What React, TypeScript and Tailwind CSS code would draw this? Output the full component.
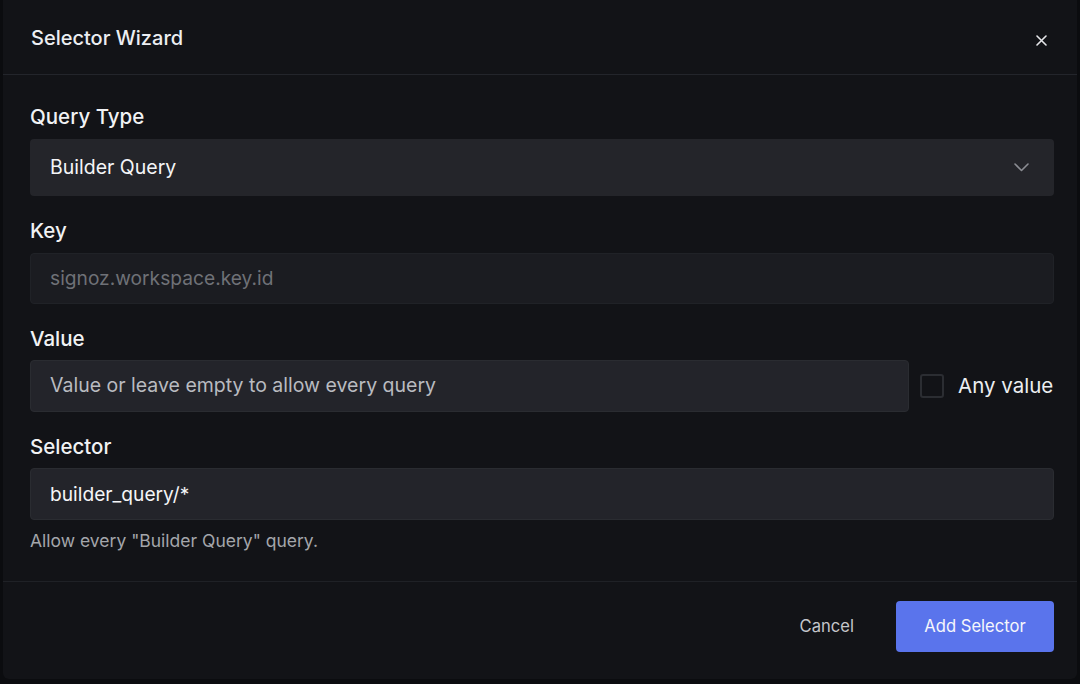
import React from "react";

export default function App() {
  const font = { fontFamily: "Inter, 'Noto Sans', sans-serif" };
  return (
    <div className="w-[1080px] h-[684px] bg-[#0b0c0f] overflow-hidden" style={font}>
      <div className="ml-[3px] w-[1074px] h-[679px] bg-[#121317] rounded-b-[6px] flex flex-col">
        {/* Header */}
        <div className="h-[75px] border-b border-[#23252b] flex items-center justify-between pl-[28px] pr-[30px] shrink-0">
          <div className="text-[20px] font-medium text-[#eceef2] mt-[1px]">Selector Wizard</div>
          <svg width="11" height="11" viewBox="0 0 11 11" className="mt-[6px]">
            <path d="M1 1 L10 10 M10 1 L1 10" stroke="#e6e7ea" strokeWidth="1.6" strokeLinecap="round" />
          </svg>
        </div>

        {/* Body */}
        <div className="flex-1 pl-[27px] pr-[23px] pt-[29px]">
          <div className="text-[20.5px] font-medium text-[#f1f2f4] leading-[26px]">Query Type</div>
          <div className="mt-[9px] h-[57px] rounded-[4px] bg-[#24252a] flex items-center justify-between pl-[20px] pr-[25px]">
            <span className="text-[19.5px] text-[#f4f5f7]">Builder Query</span>
            <svg width="15" height="9" viewBox="0 0 15 9">
              <path d="M1 1 L7.5 7.5 L14 1" fill="none" stroke="#8b8d93" strokeWidth="1.6" strokeLinecap="round" strokeLinejoin="round" />
            </svg>
          </div>

          <div className="mt-[22px] text-[20.5px] font-medium text-[#f1f2f4] leading-[26px]">Key</div>
          <div className="mt-[9px] h-[51px] rounded-[4px] bg-[#1b1c21] border border-[#202227] flex items-center pl-[19px]">
            <span className="text-[19.2px] text-[#6f7177]">signoz.workspace.key.id</span>
          </div>

          <div className="mt-[22px] text-[20.5px] font-medium text-[#f1f2f4] leading-[26px]">Value</div>
          <div className="mt-[8px] flex items-center">
            <div className="w-[879px] h-[52px] rounded-[4px] bg-[#23242a] border border-[#2a2c31] flex items-center pl-[19px]">
              <span className="text-[19.5px] text-[#b9bbc0]">Value or leave empty to allow every query</span>
            </div>
            <div className="ml-[11px] w-[24px] h-[24px] rounded-[3px] border-2 border-[#2b2d32] bg-[#121317]" />
            <span className="ml-[14px] text-[20.5px] text-[#eceef1] mt-[1px]">Any value</span>
          </div>

          <div className="mt-[22px] text-[20.5px] font-medium text-[#f1f2f4] leading-[26px]">Selector</div>
          <div className="mt-[8px] h-[52px] rounded-[4px] bg-[#23242a] border border-[#2a2c31] flex items-center pl-[19px]">
            <span className="text-[19.2px] text-[#f4f5f7]">builder_query/*</span>
          </div>
          <div className="mt-[10px] text-[17.5px] text-[#a4a6ab] leading-[22px]">Allow every "Builder Query" query.</div>
        </div>

        {/* Footer */}
        <div className="h-[98px] border-t border-[#1f2126] flex items-center justify-end pr-[23px] pb-[8px] shrink-0">
          <button className="text-[16.6px] text-[#c4c6ca] mr-[42px]">Cancel</button>
          <button className="w-[158px] h-[51px] rounded-[4px] bg-[#5a74ec] text-[16.6px] text-[#f5f6fb]">Add Selector</button>
        </div>
      </div>
    </div>
  );
}
